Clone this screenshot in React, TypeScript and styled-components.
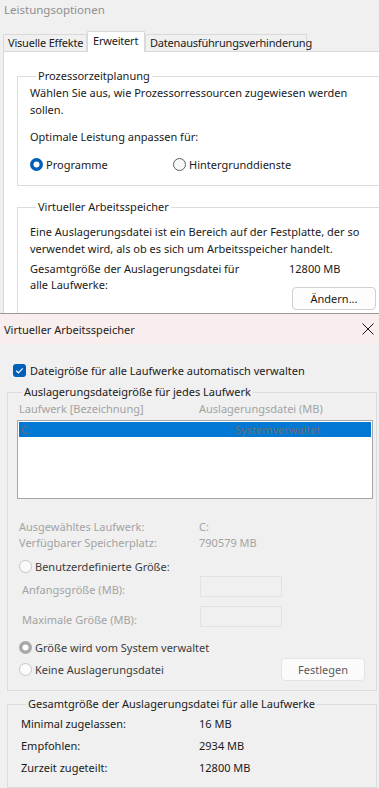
import React from "react";
import styled, { createGlobalStyle, css } from "styled-components";

const GlobalStyle = createGlobalStyle`
    html, body {
        margin: 0;
        padding: 0;
        background: #f0f0f0;
    }
    body {
        font-family: "Noto Sans", "Open Sans", sans-serif;
        font-size: 11px;
        color: #1a1a1a;
    }
`;

const Page = styled.div`
    width: 379px;
    height: 788px;
    overflow: hidden;
    display: flex;
    flex-direction: column;
`;

/* ---------- back window: Leistungsoptionen ---------- */

const PerfWindow = styled.div`
    height: 313px;
    flex-shrink: 0;
    overflow: hidden;
    display: flex;
    flex-direction: column;
    background: #f0f0f0;
`;

const FadedTitle = styled.div`
    flex-shrink: 0;
    height: 31px;
    padding-left: 4px;
    line-height: 19px;
    font-size: 11.5px;
    color: #8f8f8f;
`;

const TabStrip = styled.div`
    flex-shrink: 0;
    display: flex;
    align-items: flex-end;
    height: 20px;
    padding-left: 3px;
    position: relative;
    z-index: 1;
`;

const Tab = styled.div<{ $w: number; $active?: boolean }>`
    box-sizing: border-box;
    width: ${p => p.$w}px;
    height: 17px;
    border: 1px solid #d9d9d9;
    border-bottom: none;
    background: #f0f0f0;
    padding-left: 4px;
    line-height: 16px;
    letter-spacing: -0.2px;
    white-space: nowrap;
    ${p => p.$active && css`
        height: 21px;
        margin-bottom: -1px;
        background: #ffffff;
        line-height: 18px;
        padding-left: 5px;
    `}
`;

const TabPanel = styled.div`
    flex: 1 0 auto;
    margin-left: 3px;
    background: #ffffff;
    border-top: 1px solid #d9d9d9;
    border-left: 1px solid #d9d9d9;
    padding: 16px 0 0 13px;
`;

const GroupBox = styled.fieldset<{ $gap?: number }>`
    margin: ${p => p.$gap ?? 0}px 0 0 0;
    min-width: 0;
    border: 1px solid #dcdcdc;
    border-right: none;
    padding: 0 0 ${p => (p.$gap ? 14 : 12)}px 12px;
`;

const Legend = styled.legend`
    padding: 0 2px;
    margin-left: 6px;
    line-height: 16px;
    color: #1a1a1a;
`;

const Para = styled.p<{ $top?: number }>`
    margin: ${p => p.$top ?? 0}px 0 0 0;
    line-height: 17px;
`;

const RadioRow = styled.div<{ $cols: string; $top: number }>`
    display: grid;
    grid-template-columns: ${p => p.$cols};
    margin-top: ${p => p.$top}px;
    align-items: center;
`;

const RadioLabel = styled.label<{ $tone?: "normal" | "dim" }>`
    display: flex;
    align-items: center;
    gap: 3px;
    line-height: 17px;
    white-space: nowrap;
    color: ${p => (p.$tone === "dim" ? "#3c3c3c" : "#1a1a1a")};
`;

const SizeGrid = styled.div`
    display: grid;
    grid-template-columns: 259px auto;
    margin-top: 4px;
    line-height: 16px;
`;

const ValueStack = styled.div`
    display: flex;
    flex-direction: column;
`;

const PushButton = styled.button<{ $w: number; $disabled?: boolean }>`
    box-sizing: border-box;
    width: ${p => p.$w}px;
    height: 23px;
    font: inherit;
    border: 1px solid ${p => (p.$disabled ? "#e4e4e4" : "#d0d0d0")};
    border-radius: 4px;
    background: ${p => (p.$disabled ? "#fbfbfb" : "#fdfdfd")};
    color: ${p => (p.$disabled ? "#5c5c5c" : "#1a1a1a")};
    padding: 0;
    line-height: 20px;
`;

/* ---------- front dialog: Virtueller Arbeitsspeicher ---------- */

const Dialog = styled.div`
    flex: 1;
    display: flex;
    flex-direction: column;
    border-top: 1px solid #9a9a9a;
    background: #f0f0f0;
`;

const DialogTitle = styled.div`
    flex-shrink: 0;
    height: 30px;
    display: flex;
    align-items: center;
    justify-content: space-between;
    padding: 0 5px 0 4px;
    background: #f9eeee;
    color: #1a1a1a;
`;

const DialogBody = styled.div`
    padding: 18px 0 0 7px;
`;

const CheckRow = styled.label`
    display: flex;
    align-items: center;
    gap: 4px;
    margin-left: 6px;
    line-height: 17px;
`;

const PageGroup = styled.fieldset<{ $gap: number; $pad: string }>`
    box-sizing: border-box;
    width: 370px;
    margin: ${p => p.$gap}px 0 0 0;
    min-width: 0;
    border: 1px solid #dcdcdc;
    padding: ${p => p.$pad};
`;

const DialogLegend = styled.legend`
    padding: 0 2px;
    margin-left: 5px;
    line-height: 16px;
    color: #1a1a1a;
`;

const InfoGrid = styled.div<{ $first: number; $top?: number; $indent?: number; $row: number; $dim?: boolean }>`
    display: grid;
    grid-template-columns: ${p => p.$first}px auto;
    grid-auto-rows: ${p => p.$row}px;
    align-items: center;
    margin-top: ${p => p.$top ?? 0}px;
    padding-left: ${p => p.$indent ?? 0}px;
    color: ${p => (p.$dim ? "#a3a3a3" : "#1a1a1a")};
    white-space: nowrap;
`;

const ListBox = styled.div`
    box-sizing: border-box;
    width: 356px;
    height: 79px;
    margin-top: 4px;
    border: 1px solid #a6a6a6;
    background: #ffffff;
    padding: 1px;
`;

const ListItem = styled.div<{ $selected?: boolean }>`
    display: grid;
    grid-template-columns: 214px auto;
    height: 15px;
    line-height: 15px;
    padding-left: 2px;
    background: ${p => (p.$selected ? "#0078d4" : "transparent")};
    color: #6e6e6e;
`;

const FieldRow = styled.div<{ $top: number }>`
    display: grid;
    grid-template-columns: 183px 82px;
    height: 21px;
    margin-top: ${p => p.$top}px;
    align-items: center;
`;

const FieldLabel = styled.span`
    padding: 5px 0 0 5px;
    color: #a3a3a3;
`;

const DisabledInput = styled.div`
    box-sizing: border-box;
    height: 21px;
    border: 1px solid #e2e2e2;
    background: #f0f0f0;
`;

const RadioIcon: React.FC<{ checked?: boolean; disabled?: boolean }> = ({ checked, disabled }) => {
    const accent = disabled ? "#a8a8a8" : "#005fb8";
    if (checked) {
        return (
            <svg width="13" height="13" viewBox="0 0 13 13">
                <circle cx="6.5" cy="6.5" r="6.5" fill={accent} />
                <circle cx="6.5" cy="6.5" r="3" fill="#ffffff" />
            </svg>
        );
    }
    return (
        <svg width="13" height="13" viewBox="0 0 13 13">
            <circle
                cx="6.5"
                cy="6.5"
                r="6"
                fill={disabled ? "#fbfbfb" : "#f7f7f7"}
                stroke={disabled ? "#c4c4c4" : "#5e5e5e"}
                strokeWidth="1"
            />
        </svg>
    );
};

const CheckIcon = () => (
    <svg width="13" height="13" viewBox="0 0 13 13">
        <rect x="0" y="0" width="13" height="13" rx="3" fill="#005fb8" />
        <path d="M3.3 6.8 L5.4 8.8 L9.7 4.3" stroke="#ffffff" strokeWidth="1.2" fill="none" />
    </svg>
);

const CloseIcon = () => (
    <svg width="12" height="12" viewBox="0 0 12 12">
        <path d="M0.5 0.5 L11.5 11.5 M11.5 0.5 L0.5 11.5" stroke="#1a1a1a" strokeWidth="1" />
    </svg>
);

const App: React.FC = () => {
    return (
        <Page>
            <GlobalStyle />
            <PerfWindow>
                <FadedTitle>Leistungsoptionen</FadedTitle>
                <TabStrip>
                    <Tab $w={84}>Visuelle Effekte</Tab>
                    <Tab $w={58} $active>Erweitert</Tab>
                    <Tab $w={162}>Datenausführungsverhinderung</Tab>
                </TabStrip>
                <TabPanel>
                    <GroupBox>
                        <Legend>Prozessorzeitplanung</Legend>
                        <Para>
                            Wählen Sie aus, wie Prozessorressourcen zugewiesen werden
                            <br />
                            sollen.
                        </Para>
                        <Para $top={10}>Optimale Leistung anpassen für:</Para>
                        <RadioRow $cols="143px auto" $top={11}>
                            <RadioLabel>
                                <RadioIcon checked />
                                Programme
                            </RadioLabel>
                            <RadioLabel>
                                <RadioIcon />
                                Hintergrunddienste
                            </RadioLabel>
                        </RadioRow>
                    </GroupBox>
                    <GroupBox $gap={13}>
                        <Legend>Virtueller Arbeitsspeicher</Legend>
                        <Para $top={8}>
                            Eine Auslagerungsdatei ist ein Bereich auf der Festplatte, der so
                            <br />
                            verwendet wird, als ob es sich um Arbeitsspeicher handelt.
                        </Para>
                        <SizeGrid>
                            <span>
                                Gesamtgröße der Auslagerungsdatei für
                                <br />
                                alle Laufwerke:
                            </span>
                            <ValueStack>
                                <span>12800 MB</span>
                                <PushButton $w={84} style={{ marginTop: 10, marginLeft: 3 }}>
                                    Ändern...
                                </PushButton>
                            </ValueStack>
                        </SizeGrid>
                    </GroupBox>
                </TabPanel>
            </PerfWindow>

            <Dialog>
                <DialogTitle>
                    <span>Virtueller Arbeitsspeicher</span>
                    <CloseIcon />
                </DialogTitle>
                <DialogBody>
                    <CheckRow>
                        <CheckIcon />
                        Dateigröße für alle Laufwerke automatisch verwalten
                    </CheckRow>

                    <PageGroup $gap={5} $pad="0 0 9px 9px">
                        <DialogLegend>Auslagerungsdateigröße für jedes Laufwerk</DialogLegend>
                        <InfoGrid $first={180} $indent={2} $row={16} $dim>
                            <span>Laufwerk [Bezeichnung]</span>
                            <span>Auslagerungsdatei (MB)</span>
                        </InfoGrid>
                        <ListBox>
                            <ListItem $selected>
                                <span>C:</span>
                                <span>Systemverwaltet</span>
                            </ListItem>
                        </ListBox>
                        <InfoGrid $first={180} $indent={2} $row={16} $top={19} $dim>
                            <span>Ausgewähltes Laufwerk:</span>
                            <span>C:</span>
                            <span>Verfügbarer Speicherplatz:</span>
                            <span>790579 MB</span>
                        </InfoGrid>
                        <RadioRow $cols="auto" $top={8} style={{ paddingLeft: 2 }}>
                            <RadioLabel $tone="dim">
                                <RadioIcon disabled />
                                Benutzerdefinierte Größe:
                            </RadioLabel>
                        </RadioRow>
                        <FieldRow $top={1}>
                            <FieldLabel>Anfangsgröße (MB):</FieldLabel>
                            <DisabledInput />
                        </FieldRow>
                        <FieldRow $top={9}>
                            <FieldLabel>Maximale Größe (MB):</FieldLabel>
                            <DisabledInput />
                        </FieldRow>
                        <RadioRow $cols="auto" $top={12} style={{ paddingLeft: 2 }}>
                            <RadioLabel $tone="dim">
                                <RadioIcon checked disabled />
                                Größe wird vom System verwaltet
                            </RadioLabel>
                        </RadioRow>
                        <RadioRow $cols="264px auto" $top={2} style={{ paddingLeft: 2, height: 23 }}>
                            <RadioLabel $tone="dim">
                                <RadioIcon disabled />
                                Keine Auslagerungsdatei
                            </RadioLabel>
                            <PushButton $w={84} $disabled style={{ marginLeft: -2 }}>
                                Festlegen
                            </PushButton>
                        </RadioRow>
                    </PageGroup>

                    <PageGroup $gap={5} $pad="0 0 9px 13px">
                        <DialogLegend>Gesamtgröße der Auslagerungsdatei für alle Laufwerke</DialogLegend>
                        <InfoGrid $first={178} $row={22}>
                            <span>Minimal zugelassen:</span>
                            <span>16 MB</span>
                            <span>Empfohlen:</span>
                            <span>2934 MB</span>
                            <span>Zurzeit zugeteilt:</span>
                            <span>12800 MB</span>
                        </InfoGrid>
                    </PageGroup>
                </DialogBody>
            </Dialog>
        </Page>
    );
};

export default App;
